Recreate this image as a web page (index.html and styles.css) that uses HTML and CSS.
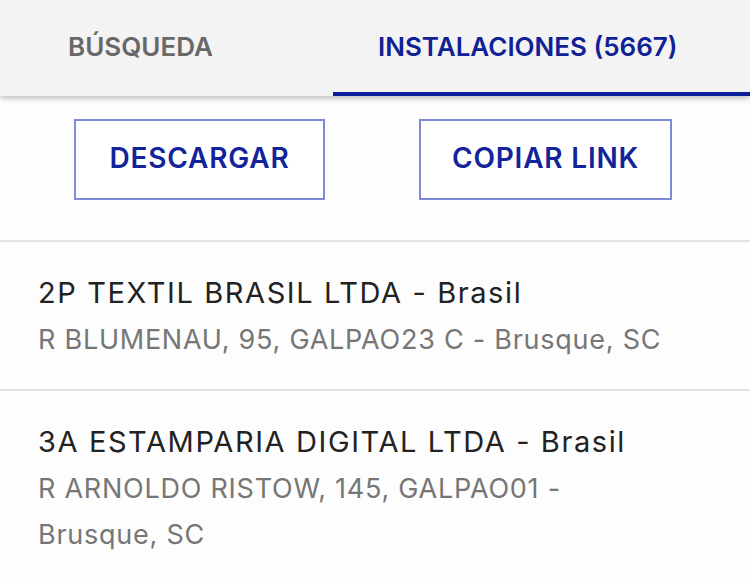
FILE: index.html
```html
<!DOCTYPE html>
<html lang="es">
<head>
<meta charset="utf-8">
<title>Instalaciones</title>
<link rel="stylesheet" href="styles.css">
</head>
<body>
<nav class="tabs">
  <div class="tab tab-search">BÚSQUEDA</div>
  <div class="tab tab-active">INSTALACIONES (5667)</div>
</nav>
<div class="actions">
  <button class="btn btn-download">DESCARGAR</button>
  <button class="btn btn-copy">COPIAR LINK</button>
</div>
<ul class="list">
  <li class="item">
    <div class="title">2P TEXTIL BRASIL LTDA - Brasil</div>
    <div class="address">R BLUMENAU, 95, GALPAO23 C - <span class="city">Brusque, SC</span></div>
  </li>
  <li class="item">
    <div class="title">3A ESTAMPARIA DIGITAL LTDA - Brasil</div>
    <div class="address">R ARNOLDO RISTOW, 145, GALPAO01 - <span class="city">Brusque, SC</span></div>
  </li>
</ul>
</body>
</html>
```
FILE: styles.css
```css
html, body {
  margin: 0;
  padding: 0;
  background: #fdfdfd;
  font-family: Inter, "Noto Sans", sans-serif;
  overflow: hidden;
}
.tabs {
  display: grid;
  grid-template-columns: 333px 1fr;
  height: 96px;
  background: #f3f3f3;
  box-shadow: 0 2px 6px rgba(0, 0, 0, 0.28);
  position: relative;
  z-index: 1;
}
.tab {
  box-sizing: border-box;
  font-size: 26px;
  font-weight: 600;
  line-height: 29px;
  padding-top: 32px;
  white-space: nowrap;
}
.tab-search {
  color: #686868;
  padding-left: 68px;
}
.tab-active {
  color: #0f2194;
  padding-left: 45px;
  border-bottom: 4px solid #0b1f9c;
}
.actions {
  display: flex;
  gap: 94px;
  padding: 23px 0 40px 74px;
  border-bottom: 2px solid #e3e3e7;
}
.btn {
  box-sizing: border-box;
  height: 81px;
  background: #fff;
  border: 2px solid #7e8ad3;
  color: #13249a;
  font-family: inherit;
  font-size: 28px;
  font-weight: 600;
  letter-spacing: 0.8px;
  padding: 0 0 4px;
  cursor: pointer;
}
.btn-download { width: 251px; }
.btn-copy { width: 253px; }
.list {
  list-style: none;
  margin: 0;
  padding: 0;
}
.item {
  padding: 27px 38px 26px;
  border-bottom: 2px solid #e3e3e7;
}
.title {
  font-size: 29px;
  line-height: 48px;
  letter-spacing: 1.6px;
  color: #222;
}
.address {
  font-size: 27px;
  line-height: 46px;
  letter-spacing: 0.75px;
  color: #767676;
}
.city {
  white-space: nowrap;
}
```
